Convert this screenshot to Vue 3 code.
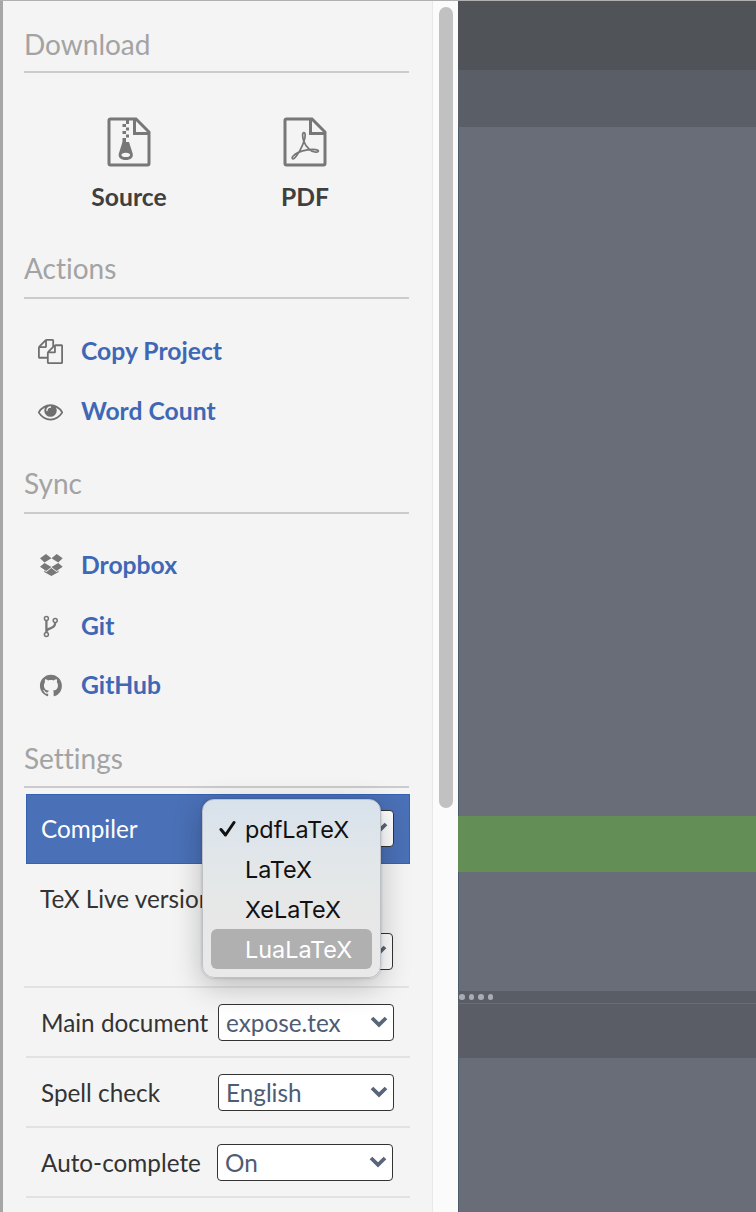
<script setup>
const actions = [
  { label: 'Copy Project', icon: 'copy' },
  { label: 'Word Count', icon: 'eye' },
]
const sync = [
  { label: 'Dropbox', icon: 'dropbox' },
  { label: 'Git', icon: 'git' },
  { label: 'GitHub', icon: 'github' },
]
const settings = [
  { label: 'Compiler', value: '', kind: 'compiler' },
  { label: 'TeX Live version', value: '', kind: 'texlive' },
  { label: 'Main document', value: 'expose.tex', kind: 'plain' },
  { label: 'Spell check', value: 'English', kind: 'plain' },
  { label: 'Auto-complete', value: 'On', kind: 'plain auto' },
]
const compilers = ['pdfLaTeX', 'LaTeX', 'XeLaTeX', 'LuaLaTeX']
</script>

<template>
  <div class="page">
    <aside class="menu">
      <h2 class="heading download">Download</h2>
      <div class="downloads">
        <a class="dl">
          <svg width="44" height="50" viewBox="0 0 44 50" fill="none" stroke="#777" stroke-width="3">
            <path d="M3 2H29L42 15V46.500Q42 48 40.500 48H3.500Q2 48 2 46.500V3.500Q2 2 3.500 2Z" />
            <path d="M27.500 2V16.500H42" />
            <g fill="#777" stroke="none">
              <path d="M19 3h3v4h-3zM15.500 7h3.500v3h-3.500zM19 10.500h3v3h-3zM15.500 14h3.500v3h-3.500zM19 17.500h3v3h-3zM15.500 21h3.500v5h-3.500z" />
              <path fill-rule="evenodd" d="M15.500 25H22L25.500 36C27 40.500 23.500 43 18.800 43S10.500 40.500 12 36ZM18.800 35.700c-2.900 0-4.300 1-4.300 2.200s1.400 2.200 4.300 2.200 4.300-1 4.300-2.200-1.400-2.200-4.300-2.200Z" />
            </g>
          </svg>
          <span>Source</span>
        </a>
        <a class="dl">
          <svg width="44" height="50" viewBox="0 0 44 50" fill="none" stroke="#777" stroke-width="3">
            <path d="M3 2H29L42 15V46.500Q42 48 40.500 48H3.500Q2 48 2 46.500V3.500Q2 2 3.500 2Z" />
            <path d="M27.500 2V16.500H42" />
            <path stroke-width="1.700" stroke-linejoin="round" d="M20.700 24C19.400 20 19.100 15.600 20.900 15.600S22.400 20 21.100 24C19.200 30 14.500 38.500 11.300 41.300C9.500 42.500 8.300 41.200 9.700 39.500C12.500 36 18.500 33.700 24.500 32.800C30.500 32 36 32.600 35.400 34.300C34.800 36 29.500 35 26.500 32.500C23 29.500 21.700 27 20.700 24Z" />
          </svg>
          <span>PDF</span>
        </a>
      </div>

      <h2 class="heading">Actions</h2>
      <ul class="links actions">
        <li v-for="item in actions" :key="item.label">
          <svg v-if="item.icon === 'copy'" class="icon" width="25" height="25" viewBox="0 0 1792 1792" fill="#6f6f6f">
            <path d="M1696 384q40 0 68 28t28 68v1216q0 40-28 68t-68 28h-960q-40 0-68-28t-28-68v-288h-544q-40 0-68-28t-28-68v-672q0-40 20-88t48-76l408-408q28-28 76-48t88-20h416q40 0 68 28t28 68v328q68-40 128-40h416zm-544 213l-299 299h299v-299zm-640-384l-299 299h299v-299zm196 647l316-316v-416h-384v416q0 40-28 68t-68 28h-416v640h512v-256q0-40 20-88t48-76zm956 804v-1152h-384v416q0 40-28 68t-68 28h-416v640h896z" />
          </svg>
          <svg v-else class="icon" width="25" height="25" viewBox="0 0 1792 1792" fill="#6f6f6f">
            <path d="M1664 960q-152-236-381-353 61 104 61 225 0 185-131.500 316.500t-316.500 131.500-316.500-131.500-131.500-316.500q0-121 61-225-229 117-381 353 133 205 333.500 326.500t434.500 121.500 434.500-121.500 333.500-326.500zm-720-384q0-20-14-34t-34-14q-125 0-214.500 89.500t-89.500 214.500q0 20 14 34t34 14 34-14 14-34q0-86 61-147t147-61q20 0 34-14t14-34zm848 384q0 34-20 69-140 230-376.500 368.500t-499.500 138.500-499.500-139-376.500-368q-20-35-20-69t20-69q140-229 376.500-368t499.500-139 499.500 139 376.500 368q20 35 20 69z" />
          </svg>
          <a>{{ item.label }}</a>
        </li>
      </ul>

      <h2 class="heading">Sync</h2>
      <ul class="links sync">
        <li v-for="item in sync" :key="item.label" :class="item.icon">
          <svg v-if="item.icon === 'dropbox'" class="icon" width="25" height="25" viewBox="0 0 25 25" fill="#777">
            <path d="M8 1L13.400 5.300L6.500 9.600L2 5.200ZM18.700 1L24.700 5.200L20.200 9.600L13.500 5.300ZM6.500 9.900L13.400 14L8.200 18L2 13.700ZM20.200 9.900L24.700 13.700L18.500 18L13.500 14ZM13.400 14.900L18.500 19L20.600 17.600V18.900L13.400 22.900L6.200 18.900V17.600L8.300 19Z" />
          </svg>
          <svg v-else-if="item.icon === 'git'" class="icon" width="25" height="25" viewBox="0 0 25 25" fill="none" stroke="#777">
            <g stroke-width="1.500">
              <circle cx="8.400" cy="4.500" r="2" /><circle cx="8.400" cy="20.500" r="2" /><circle cx="17.200" cy="6.500" r="2" />
            </g>
            <path stroke-width="2.300" d="M8.400 6.800V18.200M8.500 17.500C9 13 17.200 16 17.200 8.800" />
          </svg>
          <svg v-else class="icon" width="25" height="25" viewBox="-1.400 -1.300 18.200 18.200" fill="#777">
            <path d="M8 0C3.580 0 0 3.580 0 8c0 3.540 2.290 6.530 5.470 7.590.4.070.55-.17.55-.38 0-.19-.01-.82-.01-1.490-2.010.37-2.530-.49-2.690-.94-.09-.23-.48-.94-.82-1.130-.28-.15-.68-.52-.01-.53.630-.01 1.080.58 1.230.82.720 1.210 1.870.87 2.330.66.070-.52.280-.87.510-1.070-1.780-.2-3.640-.89-3.640-3.950 0-.87.310-1.590.820-2.150-.08-.2-.36-1.020.080-2.120 0 0 .67-.21 2.200.82.640-.18 1.320-.27 2-.27s1.360.09 2 .27c1.530-1.040 2.200-.82 2.200-.82.440 1.100.160 1.920.080 2.120.510.560.820 1.270.820 2.150 0 3.070-1.870 3.750-3.650 3.950.290.250.540.730.540 1.480 0 1.070-.01 1.930-.01 2.200 0 .21.150.460.550.38A8.010 8.010 0 0 0 16 8c0-4.420-3.580-8-8-8z" />
          </svg>
          <a>{{ item.label }}</a>
        </li>
      </ul>

      <h2 class="heading last">Settings</h2>
      <div class="settings">
        <div v-for="row in settings" :key="row.label" class="row" :class="row.kind">
          <label>{{ row.label }}</label>
          <div class="select">
            <span>{{ row.value }}</span>
            <svg width="18" height="13" viewBox="0 0 18 13" fill="none" stroke="#596679" stroke-width="3.800">
              <path d="M2 2L9 8.800L16 2" />
            </svg>
          </div>
          <div v-if="row.kind === 'compiler'" class="popup">
            <div v-for="(name, i) in compilers" :key="name" class="option" :class="{ hot: i === 3 }">
              <span class="check">
                <svg v-if="i === 0" width="17" height="18" viewBox="0 0 17 18" fill="none" stroke="#111" stroke-width="3" stroke-linecap="round" stroke-linejoin="round">
                  <path d="M2 9.500L6.500 15L15 2.500" />
                </svg>
              </span>
              <span>{{ name }}</span>
            </div>
          </div>
        </div>
      </div>
    </aside>
    <div class="track"><div class="thumb"></div></div>
    <main class="editor">
      <div class="topbar"></div>
      <div class="toolbar"></div>
      <div class="code"></div>
      <div class="active-line"></div>
      <div class="code-end"></div>
      <div class="splitter"><i v-for="n in 4" :key="n"></i></div>
      <div class="lower"></div>
    </main>
  </div>
</template>

<style>
body { margin: 0; overflow: hidden; }
</style>

<style scoped>
* { box-sizing: border-box; }
.page {
  display: flex;
  width: 756px;
  height: 1212px;
  overflow: hidden;
  border-top: 1px solid #b0b0b0;
  background: #f4f4f4;
  font-family: Lato, "Liberation Sans", sans-serif;
  font-variant-ligatures: none;
}
.menu {
  width: 432px;
  flex: none;
  padding-left: 21px;
  border-left: 3px solid #a6a6a6;
}
.heading {
  width: 385px;
  height: 42px;
  margin: 0;
  border-bottom: 2px solid #cbcbcb;
  color: #a3a3a3;
  font-size: 28px;
  font-weight: 400;
  line-height: 22px;
}
.download { height: 40px; margin-top: 32px; }
.last { line-height: 24px; }
.downloads { display: flex; height: 184px; padding-top: 44px; }
.dl {
  display: flex;
  flex-direction: column;
  align-items: center;
  width: 176px;
  margin-left: 17px;
  color: #3f3f3f;
  font-size: 24.700px;
  font-weight: 700;
}
.dl + .dl { margin-left: 0; }
.dl span { margin-top: 15px; line-height: 30px; }
.links { margin: 0; padding: 0 0 0 14px; list-style: none; }
.links li { display: flex; align-items: center; height: 60px; }
.links a { margin-left: 18px; color: #3e68b5; font-size: 24.700px; font-weight: 700; line-height: 30px; }
.icon { flex: none; }
.actions { height: 173px; padding-top: 22px; }
.sync { height: 232px; padding-top: 21px; }
.links .git { padding-top: 2px; }
.row {
  position: relative;
  display: flex;
  justify-content: space-between;
  width: 384px;
  height: 70px;
  margin-left: 2px;
  padding: 16px 16px 0 15px;
  border-bottom: 2px solid #e2e2e2;
  color: #333;
  font-size: 24.300px;
}
.row label { line-height: 37px; white-space: nowrap; }
.compiler { margin-top: 6px; border: 0; background: #4a70b7; box-shadow: inset 0 0 0 1px #3563b4; color: #fff; }
.texlive { width: 385px; height: 124px; margin-left: 0; padding-left: 16px; }
.texlive .select { margin-top: 53px; margin-left: -80px; }
.select {
  display: flex;
  flex: none;
  align-items: center;
  justify-content: space-between;
  width: 176px;
  height: 37px;
  padding: 0 5px 0 7px;
  border: 1.500px solid #333;
  border-radius: 4px;
  background: #fff;
  color: #4e5c74;
  line-height: 34px;
}
.auto .select { margin-right: 1px; }
.popup {
  position: absolute;
  z-index: 2;
  top: 5px;
  left: 176px;
  width: 179px;
  height: 179px;
  padding: 9px 8px;
  border: 1px solid #bcc1c7;
  border-radius: 12px;
  background: linear-gradient(#d8e2ec, #e3e7e9 40%, #e7e7e7 62%, #e9e9e9);
  box-shadow: 0 8px 30px rgba(0, 0, 0, .24), 0 0 3px rgba(0, 0, 0, .2);
  color: #111;
  font-family: Inter, sans-serif;
  font-size: 23.400px;
}
.option { display: flex; height: 40px; border-radius: 6px; line-height: 41px; }
.hot { background: #b0b0b1; color: #fff; }
.check { display: flex; align-items: center; width: 34px; padding-left: 8px; }
.track { width: 26px; flex: none; padding: 6px 0 0 6px; border-left: 1px solid #e8e8e8; background: #fbfbfb; }
.thumb { width: 14px; height: 801px; border-radius: 7px; background: #c1c1c1; }
.editor { flex: 1; display: flex; flex-direction: column; background: #696d78; box-shadow: inset 1px 0 0 #4d5a6b; }
.topbar { height: 69px; background: #505358; }
.toolbar { height: 57px; background: #5a5e66; }
.code { height: 689px; }
.active-line { height: 56px; background: #638f57; }
.code-end { height: 119px; }
.splitter { display: flex; align-items: center; gap: 4px; height: 13px; padding-left: 1px; border-bottom: 1px solid #696d76; background: #595d65; }
.splitter i { width: 5.500px; height: 5.500px; border-radius: 50%; background: #a9acb2; }
.lower { height: 54px; background: #5a5d65; }
</style>
